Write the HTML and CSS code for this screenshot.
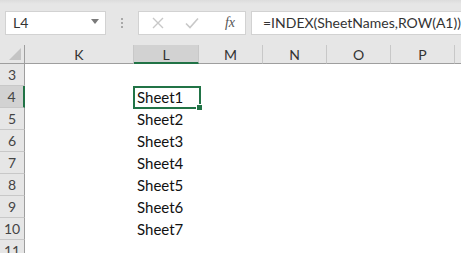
FILE: index.html
```html
<!DOCTYPE html>
<html>
<head>
    <meta charset="utf-8">
    <title>Sheet names</title>
    <link rel="stylesheet" href="styles.css">
</head>
<body>
    <div class="toolbar">
        <div class="name-box">
            <span>L4</span>
            <svg class="caret" width="8" height="5" viewBox="0 0 8 5"><path d="M0 0H8L4 5Z" fill="#7a7a7a"/></svg>
        </div>
        <div class="grip"><i></i><i></i><i></i></div>
        <div class="fx-box">
            <svg class="icon" width="12" height="12" viewBox="0 0 12 12"><path d="M1 1L11 11M11 1L1 11" stroke="#c8c8c8" stroke-width="1.4" fill="none"/></svg>
            <svg class="icon" width="14" height="12" viewBox="0 0 14 12"><path d="M1 6.5L5 10.5L13 1.5" stroke="#c8c8c8" stroke-width="1.6" fill="none"/></svg>
            <span class="fx">fx</span>
        </div>
        <div class="formula">=INDEX(SheetNames,ROW(A1))</div>
    </div>
    <div class="sheet">
        <div class="row head">
            <div class="rh corner"><svg width="12" height="12" viewBox="0 0 12 12"><path d="M12 0V12H0Z" fill="#c4c4c4"/></svg></div>
            <div class="ch wide">K</div>
            <div class="ch sel">L</div>
            <div class="ch">M</div>
            <div class="ch">N</div>
            <div class="ch">O</div>
            <div class="ch">P</div>
            <div class="ch"></div>
        </div>
        <div class="row"><div class="rh">3</div><div class="cell wide"></div><div class="cell"></div></div>
        <div class="row"><div class="rh sel">4</div><div class="cell wide"></div><div class="cell active">Sheet1<b class="handle"></b></div></div>
        <div class="row"><div class="rh">5</div><div class="cell wide"></div><div class="cell">Sheet2</div></div>
        <div class="row"><div class="rh">6</div><div class="cell wide"></div><div class="cell">Sheet3</div></div>
        <div class="row"><div class="rh">7</div><div class="cell wide"></div><div class="cell">Sheet4</div></div>
        <div class="row"><div class="rh">8</div><div class="cell wide"></div><div class="cell">Sheet5</div></div>
        <div class="row"><div class="rh">9</div><div class="cell wide"></div><div class="cell">Sheet6</div></div>
        <div class="row"><div class="rh">10</div><div class="cell wide"></div><div class="cell">Sheet7</div></div>
        <div class="row"><div class="rh">11</div><div class="cell wide"></div><div class="cell"></div></div>
    </div>
</body>
</html>
```
FILE: styles.css
```css
body {
    margin: 0;
    width: 461px;
    height: 253px;
    overflow: hidden;
    background-color: #fff;
    font-family: Lato, "Open Sans", sans-serif;
    color: #222;
}
.toolbar {
    height: 45px;
    background: linear-gradient(#dcdcdc, #e6e6e6 4px, #e6e6e6);
    display: flex;
    align-items: center;
    box-sizing: border-box;
    padding: 0 0 0 5px;
}
.name-box {
    flex: none;
    width: 101px;
    height: 24px;
    box-sizing: border-box;
    background-color: #fff;
    border: 1px solid #d2d2d2;
    display: flex;
    align-items: center;
    justify-content: space-between;
    padding: 0 6px 0 7px;
    font-size: 14px;
    color: #333;
}
.caret {
    margin-top: -2px;
}
.grip {
    flex: none;
    width: 32px;
    display: flex;
    flex-direction: column;
    align-items: center;
    gap: 2px;
}
.grip i {
    width: 2px;
    height: 2px;
    background-color: #a8a8a8;
}
.fx-box {
    flex: none;
    width: 108px;
    height: 24px;
    box-sizing: border-box;
    background-color: #fff;
    border: 1px solid #d2d2d2;
    display: flex;
    align-items: center;
    padding: 0 10px 0 13px;
    gap: 21px;
}
.fx {
    margin-left: auto;
    font-family: "Liberation Serif", serif;
    font-style: italic;
    font-size: 14px;
    color: #555;
}
.formula {
    flex: 1;
    min-width: 0;
    overflow: hidden;
    height: 24px;
    margin-left: 5px;
    box-sizing: border-box;
    background-color: #fff;
    border: 1px solid #d2d2d2;
    border-right: none;
    padding-left: 11px;
    font-size: 14px;
    line-height: 22px;
    color: #333;
    white-space: nowrap;
}
.row {
    display: flex;
    height: 22px;
}
.row.head {
    height: 19px;
}
.rh {
    width: 25px;
    flex: none;
    box-sizing: border-box;
    background-color: #e6e6e6;
    border-right: 1px solid #9e9e9e;
    border-bottom: 1px solid #c8c8c8;
    text-align: center;
    font-size: 14px;
    line-height: 22px;
    color: #444;
}
.rh.sel {
    background-color: #d2d2d2;
    border-right: 2px solid #217346;
}
.corner {
    display: flex;
    align-items: flex-end;
    justify-content: flex-end;
    padding: 0 3px 3px 0;
    border-bottom: 1px solid #9e9e9e;
}
.ch {
    width: 64px;
    flex: none;
    box-sizing: border-box;
    background-color: #e6e6e6;
    border-right: 1px solid #c8c8c8;
    border-bottom: 1px solid #9e9e9e;
    text-align: center;
    font-size: 14px;
    line-height: 19px;
    color: #333;
}
.ch.wide, .cell.wide {
    width: 109px;
}
.ch.sel {
    width: 65px;
    background-color: #d2d2d2;
    border-bottom: 2px solid #217346;
}
.cell {
    width: 65px;
    flex: none;
    box-sizing: border-box;
    padding-left: 3px;
    font-size: 15px;
    line-height: 22px;
    color: #111;
    position: relative;
}
.cell.active {
    border: 2px solid #217346;
    margin: 0 -2px 0 -1px;
    width: 68px;
    height: 23px;
    padding-left: 2px;
    line-height: 19px;
}
.handle {
    position: absolute;
    right: -4px;
    bottom: -4px;
    width: 5px;
    height: 5px;
    background-color: #217346;
    border: 1px solid #fff;
}
```
